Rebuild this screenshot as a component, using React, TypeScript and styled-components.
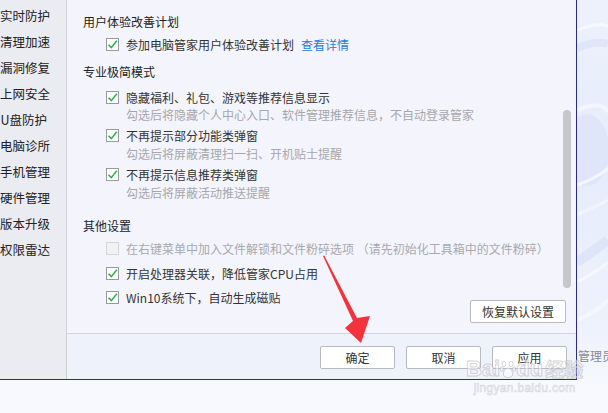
import React from "react";
import styled, { createGlobalStyle } from "styled-components";

const Global = createGlobalStyle`
  html, body { margin: 0; padding: 0; }
  body {
    width: 608px; height: 413px; overflow: hidden;
    font-family: "Noto Sans CJK SC", "Noto Sans", sans-serif;
    font-size: 12px; color: #333;
  }
`;

const Page = styled.div`
  position: relative;
  width: 608px;
  height: 413px;
  overflow: hidden;
  background: #f7f9fe;
  display: flex;
  align-items: flex-start;
`;

const Dialog = styled.div`
  flex: none;
  width: 576px;
  height: 379px;
  display: flex;
  border-right: 1px solid #2c2b8c;
  border-bottom: 1px solid #2c2b8c;
`;

const Sidebar = styled.nav`
  flex: none;
  width: 67px;
  border-right: 1px solid #cfcfd6;
  background: #ebebf2;
  padding-top: 3px;
  box-sizing: border-box;
  display: flex;
  flex-direction: column;
`;

const NavItem = styled.div`
  height: 26px;
  line-height: 26px;
  font-size: 12.5px;
  text-align: right;
  padding-right: 19px;
  color: #222;
  white-space: nowrap;
`;

const Main = styled.div`
  flex: 1;
  display: flex;
  flex-direction: column;
  min-width: 0;
`;

const Content = styled.div`
  position: relative;
  height: 333px;
  border-bottom: 1px solid #d4d5db;
  background: #f4f5fc;
  display: grid;
  overflow: hidden;
`;

const Options = styled.div`
  grid-area: 1 / 1;
  padding: 12px 0 0 16px;
  display: flex;
  flex-direction: column;
`;

const Title = styled.div<{ $mt?: number }>`
  height: 20px;
  line-height: 20px;
  margin-top: ${(p) => p.$mt ?? 0}px;
  color: #222;
  font-size: 12px;
`;

const Row = styled.label<{ $mt?: number; $disabled?: boolean }>`
  display: flex;
  align-items: center;
  gap: 7px;
  height: 20px;
  margin-top: ${(p) => p.$mt ?? 0}px;
  padding-left: 23px;
  color: ${(p) => (p.$disabled ? "#a9a9ad" : "#333")};
  white-space: nowrap;
`;

const Box = styled.span<{ $disabled?: boolean }>`
  flex: none;
  width: 13px;
  height: 13px;
  box-sizing: border-box;
  border: 1px solid ${(p) => (p.$disabled ? "#d6d6da" : "#9a9a9e")};
  background: ${(p) => (p.$disabled ? "#f2f2f5" : "#fff")};
  display: flex;
  align-items: center;
  justify-content: center;
`;

const Link = styled.span`
  color: #1c7de3;
  margin-left: 7px;
`;

const Sub = styled.div<{ $mt?: number }>`
  height: 16px;
  line-height: 16px;
  margin-top: ${(p) => p.$mt ?? 0}px;
  padding-left: 43px;
  color: #a7a7ab;
  white-space: nowrap;
`;

const Restore = styled.div`
  grid-area: 1 / 1;
  justify-self: end;
  align-self: end;
  margin: 0 10px 10px 0;
`;

const Button = styled.button<{ $w: number }>`
  width: ${(p) => p.$w}px;
  height: 23px;
  padding: 0;
  border: 1px solid #b9b9c0;
  border-radius: 2px;
  background: #fff;
  color: #333;
  font-family: inherit;
  font-size: 12px;
  line-height: 21px;
`;

const Thumb = styled.div`
  position: absolute;
  left: 496px;
  top: 110px;
  width: 8px;
  height: 178px;
  border-radius: 4px;
  background: #c6c6cb;
`;

const Footer = styled.div`
  height: 45px;
  background: #eef2fa;
  display: flex;
  justify-content: flex-end;
  gap: 11px;
  padding: 12px 9px 0 0;
  box-sizing: border-box;
`;

const Backdrop = styled.div`
  flex: 1;
  align-self: stretch;
  position: relative;
  display: flex;
  flex-direction: column;
  background: linear-gradient(180deg, #edf1fc 0%, #e6ecfb 40%, #eef2fd 80%, #f7f9fe 95%);
  overflow: hidden;
`;

const Swirl = styled.svg`
  display: block;
  flex: none;
`;

const AdminText = styled.div`
  padding-left: 1px;
  color: #8a8a90;
  font-size: 12px;
  line-height: 16px;
  white-space: nowrap;
`;

const Watermark = styled.div`
  position: absolute;
  left: 466px;
  top: 357px;
  display: flex;
  flex-direction: column;
  align-items: center;
  pointer-events: none;
`;

const WmMain = styled.div`
  display: flex;
  align-items: center;
  font-family: "Liberation Sans", Arial, sans-serif;
  font-weight: bold;
  font-size: 22px;
  line-height: 24px;
  color: rgba(255, 255, 255, 0.55);
  -webkit-text-stroke: 1px rgba(175, 175, 185, 0.55);
`;

const WmCn = styled.span`
  font-family: "Noto Sans CJK SC", sans-serif;
  font-size: 19px;
  margin-left: 2px;
`;

const WmSub = styled.div`
  font-family: "Liberation Sans", Arial, sans-serif;
  font-size: 12px;
  line-height: 14px;
  letter-spacing: 0.3px;
  color: rgba(255, 255, 255, 0.5);
  -webkit-text-stroke: 0.6px rgba(175, 175, 185, 0.5);
`;

const Arrow = styled.svg`
  position: absolute;
  left: 0;
  top: 0;
  pointer-events: none;
`;

const Check = () => (
  <svg width="11" height="11" viewBox="0 0 11 11">
    <path d="M1.5 5.8 L4.3 8.6 L9.8 1.8" fill="none" stroke="#26b148" strokeWidth="1.5" />
  </svg>
);

const Option: React.FC<{ mt?: number; disabled?: boolean; checked?: boolean; children: React.ReactNode }> = ({
  mt,
  disabled,
  checked = true,
  children,
}) => (
  <Row $mt={mt} $disabled={disabled}>
    <Box $disabled={disabled}>{checked && !disabled ? <Check /> : null}</Box>
    <span>{children}</span>
  </Row>
);

const nav = ["实时防护", "清理加速", "漏洞修复", "上网安全", "U盘防护", "电脑诊所", "手机管理", "硬件管理", "版本升级", "权限雷达"];

export default function App() {
  return (
    <>
      <Global />
      <Page>
        <Dialog>
          <Sidebar>
            {nav.map((n) => (
              <NavItem key={n}>{n}</NavItem>
            ))}
          </Sidebar>
          <Main>
            <Content>
              <Options>
                <Title>用户体验改善计划</Title>
                <Option mt={2}>
                  参加电脑管家用户体验改善计划<Link>查看详情</Link>
                </Option>
                <Title $mt={8}>专业极简模式</Title>
                <Option mt={5}>隐藏福利、礼包、游戏等推荐信息显示</Option>
                <Sub>勾选后将隐藏个人中心入口、软件管理推荐信息，不自动登录管家</Sub>
                <Option mt={2}>不再提示部分功能类弹窗</Option>
                <Sub $mt={1}>勾选后将屏蔽清理扫一扫、开机贴士提醒</Sub>
                <Option mt={2}>不再提示信息推荐类弹窗</Option>
                <Sub $mt={1}>勾选后将屏蔽活动推送提醒</Sub>
                <Title $mt={15}>其他设置</Title>
                <Option mt={2} disabled>
                  在右键菜单中加入文件解锁和文件粉碎选项&nbsp;（请先初始化工具箱中的文件粉碎）
                </Option>
                <Option mt={5}>开启处理器关联，降低管家CPU占用</Option>
                <Option mt={4}>Win10系统下，自动生成磁贴</Option>
              </Options>
              <Restore>
                <Button $w={96}>恢复默认设置</Button>
              </Restore>
              <Thumb />
            </Content>
            <Footer>
              <Button $w={75}>确定</Button>
              <Button $w={75}>取消</Button>
              <Button $w={75}>应用</Button>
            </Footer>
          </Main>
        </Dialog>
        <Backdrop>
          <Swirl width="31" height="348" viewBox="0 0 31 348">
            <path d="M0 30 Q20 22 31 26" stroke="#f6f8fe" strokeWidth="3" fill="none" />
            <path d="M0 48 Q18 40 31 44" stroke="#dfe6fa" strokeWidth="8" fill="none" />
            <path d="M0 110 Q25 100 31 112" stroke="#f3f6fe" strokeWidth="4" fill="none" />
            <ellipse cx="10" cy="150" rx="22" ry="36" fill="#dbe3f9" opacity="0.7" />
            <path d="M0 185 Q20 178 31 168" stroke="#f5f7fe" strokeWidth="3" fill="none" />
            <path d="M0 215 Q22 205 31 200" stroke="#f1f4fd" strokeWidth="3" fill="none" />
            <path d="M0 262 Q18 250 31 240" stroke="#dde5f9" strokeWidth="10" fill="none" />
            <path d="M0 282 Q20 272 31 262" stroke="#f6f8fe" strokeWidth="3" fill="none" />
            <path d="M0 320 Q20 312 31 300" stroke="#f4f7fe" strokeWidth="4" fill="none" />
          </Swirl>
          <AdminText>管理员</AdminText>
        </Backdrop>
        <Watermark>
          <WmMain>
            Bai
            <svg width="16" height="20" viewBox="0 0 16 20">
              <g fill="rgba(255,255,255,0.55)" stroke="rgba(175,175,185,0.55)" strokeWidth="1">
                <ellipse cx="4" cy="5" rx="2" ry="2.6" />
                <ellipse cx="11" cy="5" rx="2" ry="2.6" />
                <ellipse cx="1.8" cy="10" rx="1.6" ry="2.2" />
                <ellipse cx="14" cy="10" rx="1.6" ry="2.2" />
                <path d="M8 9 C4 9 2.5 15 4 17 C5.5 19 10.5 19 12 17 C13.5 15 12 9 8 9 Z" />
              </g>
            </svg>
            du
            <WmCn>经验</WmCn>
          </WmMain>
          <WmSub>jingyan.baidu.com</WmSub>
        </Watermark>
        <Arrow width="608" height="413" viewBox="0 0 608 413">
          <path d="M323 256 L324.2 255.6 L357 318 L370 316 L361 343 L345 328 L353 321 Z" fill="#f2333b" />
        </Arrow>
      </Page>
    </>
  );
}
